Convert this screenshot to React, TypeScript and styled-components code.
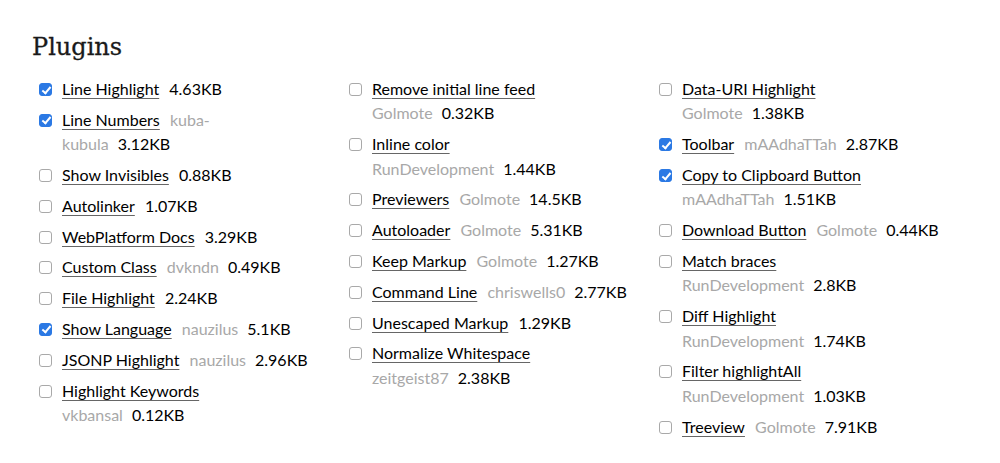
import React from "react";
import styled, { createGlobalStyle } from "styled-components";

const Global = createGlobalStyle`
  html, body { margin: 0; padding: 0; background: #fff; }
  body { font-family: Lato, "Liberation Sans", sans-serif; color: #000; }
`;

const Page = styled.section`
  padding: 32px 0 0 32px;
`;

const Title = styled.h2`
  margin: 0;
  font-family: "DejaVu Serif", "Liberation Serif", serif;
  font-weight: normal;
  font-size: 24px;
  line-height: 30px;
  color: #1a1a1a;
  -webkit-text-stroke: 0.3px #1a1a1a;
`;

const Columns = styled.div`
  display: grid;
  grid-template-columns: repeat(3, 310px);
  margin: 15px 0 0 3px;
`;

const Column = styled.ul<{ $textWidth: number }>`
  list-style: none;
  margin: 0;
  padding: 0;
  display: flex;
  flex-direction: column;
  gap: 6.4px;
  width: ${(p) => p.$textWidth + 27}px;
`;

const Item = styled.li`
  display: flex;
  align-items: flex-start;
  font-size: 16px;
  line-height: 24.4px;
`;

const Check = styled.input.attrs({ type: "checkbox" })`
  appearance: none;
  -webkit-appearance: none;
  position: relative;
  flex: none;
  box-sizing: border-box;
  width: 13px;
  height: 13px;
  margin: 6px 10px 0 4px;
  border: 1px solid #a9a9a9;
  border-radius: 3px;
  background: #fff;

  &:checked {
    background: #2b79e4;
    border-color: #2b79e4;
  }
  &:checked::after {
    content: "";
    position: absolute;
    left: 3.5px;
    top: 0.5px;
    width: 3px;
    height: 7px;
    border: solid #fff;
    border-width: 0 2px 2px 0;
    transform: rotate(40deg);
  }
`;

const Text = styled.span`
  flex: 1;
  min-width: 0;
`;

const Name = styled.a`
  color: #000;
  text-decoration: underline;
  text-decoration-color: #666;
  text-decoration-thickness: 1px;
  text-underline-offset: 3px;
  margin-right: 6px;
  cursor: pointer;
`;

const Author = styled.span`
  color: #a8a8a8;
  padding-right: 9px;
`;

const Size = styled.span`
  color: #000;
`;

type Plugin = { name: string; author?: string; size: string; checked?: boolean };

const columns: { textWidth: number; items: Plugin[] }[] = [
  {
    textWidth: 250,
    items: [
      { name: "Line Highlight", size: "4.63KB", checked: true },
      { name: "Line Numbers", author: "kuba-kubula", size: "3.12KB", checked: true },
      { name: "Show Invisibles", size: "0.88KB" },
      { name: "Autolinker", size: "1.07KB" },
      { name: "WebPlatform Docs", size: "3.29KB" },
      { name: "Custom Class", author: "dvkndn", size: "0.49KB" },
      { name: "File Highlight", size: "2.24KB" },
      { name: "Show Language", author: "nauzilus", size: "5.1KB", checked: true },
      { name: "JSONP Highlight", author: "nauzilus", size: "2.96KB" },
      { name: "Highlight Keywords", author: "vkbansal", size: "0.12KB" },
    ],
  },
  {
    textWidth: 260,
    items: [
      { name: "Remove initial line feed", author: "Golmote", size: "0.32KB" },
      { name: "Inline color", author: "RunDevelopment", size: "1.44KB" },
      { name: "Previewers", author: "Golmote", size: "14.5KB" },
      { name: "Autoloader", author: "Golmote", size: "5.31KB" },
      { name: "Keep Markup", author: "Golmote", size: "1.27KB" },
      { name: "Command Line", author: "chriswells0", size: "2.77KB" },
      { name: "Unescaped Markup", size: "1.29KB" },
      { name: "Normalize Whitespace", author: "zeitgeist87", size: "2.38KB" },
    ],
  },
  {
    textWidth: 260,
    items: [
      { name: "Data-URI Highlight", author: "Golmote", size: "1.38KB" },
      { name: "Toolbar", author: "mAAdhaTTah", size: "2.87KB", checked: true },
      { name: "Copy to Clipboard Button", author: "mAAdhaTTah", size: "1.51KB", checked: true },
      { name: "Download Button", author: "Golmote", size: "0.44KB" },
      { name: "Match braces", author: "RunDevelopment", size: "2.8KB" },
      { name: "Diff Highlight", author: "RunDevelopment", size: "1.74KB" },
      { name: "Filter highlightAll", author: "RunDevelopment", size: "1.03KB" },
      { name: "Treeview", author: "Golmote", size: "7.91KB" },
    ],
  },
];

export default function App() {
  return (
    <>
      <Global />
      <Page>
        <Title>Plugins</Title>
        <Columns>
          {columns.map((col, ci) => (
            <Column key={ci} $textWidth={col.textWidth}>
              {col.items.map((p) => (
                <Item key={p.name}>
                  <Check defaultChecked={!!p.checked} />
                  <Text>
                    <Name>{p.name}</Name>{" "}
                    {p.author && <Author>{p.author}</Author>}
                    <Size>{p.size}</Size>
                  </Text>
                </Item>
              ))}
            </Column>
          ))}
        </Columns>
      </Page>
    </>
  );
}
